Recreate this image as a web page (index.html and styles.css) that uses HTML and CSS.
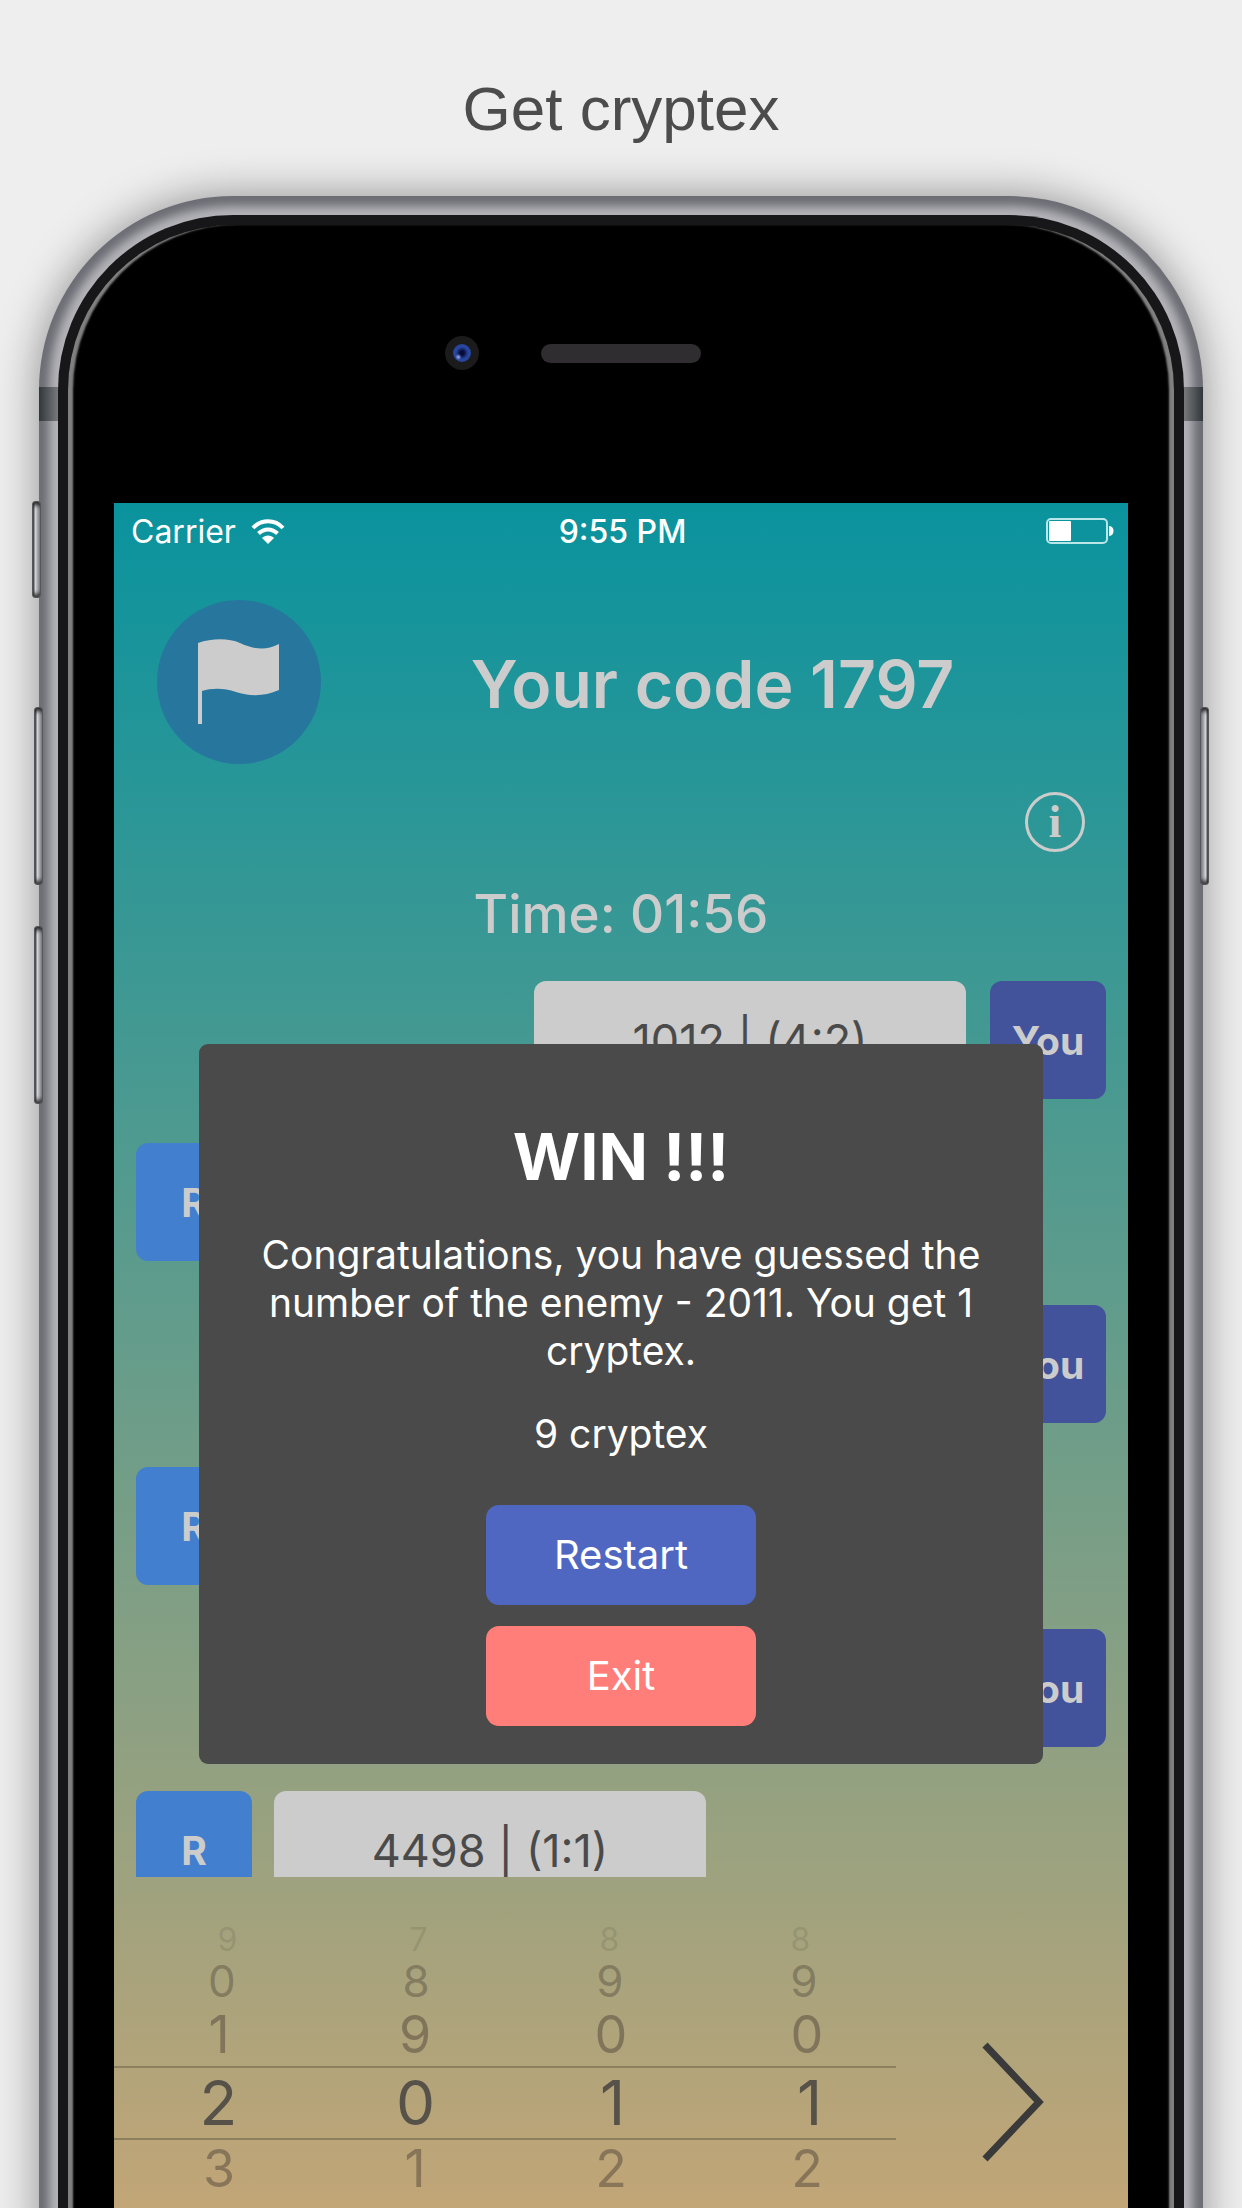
FILE: index.html
```html
<!DOCTYPE html>
<html lang="en">
<head>
  <meta charset="utf-8">
  <meta name="viewport" content="width=device-width, initial-scale=1">
  <title>Get cryptex</title>
  <link rel="stylesheet" href="styles.css">
</head>
<body>
  <main class="promo">
    <h1 class="promo-title">Get cryptex</h1>

    <div class="phone">
      <span class="side-key key-mute"></span>
      <span class="side-key key-up"></span>
      <span class="side-key key-down"></span>
      <span class="side-key key-power"></span>

      <div class="rim">
        <div class="face">
          <div class="sensors">
            <span class="camera"></span>
            <span class="speaker"></span>
          </div>

          <div class="screen">
            <div class="status">
              <div class="carrier">
                <span>Carrier</span>
                <svg width="34" height="25" viewBox="0 0 34 25" aria-hidden="true">
                  <g fill="none" stroke="#fff" stroke-width="4">
                    <path d="M2 9C10 0 24 0 32 9"/>
                    <path d="M7.500 14.500C13 9 21 9 26.500 14.500"/>
                  </g>
                  <path d="M11 19C14 15.500 20 15.500 23 19L17 25Z" fill="#fff"/>
                </svg>
              </div>
              <time class="clock">9:55 PM</time>
              <svg class="battery" width="68" height="26" viewBox="0 0 68 26" aria-hidden="true">
                <rect x="1" y="1" width="60" height="24" rx="4" fill="none" stroke="#b9e6e8" stroke-width="2"/>
                <rect x="3" y="3" width="22" height="20" rx="1" fill="#fff"/>
                <path d="M63 8C69 8 69 18 63 18Z" fill="#fff"/>
              </svg>
            </div>

            <header class="game-head">
              <button class="flag" type="button" aria-label="Give up">
                <svg width="82" height="86" viewBox="0 0 82 86" aria-hidden="true">
                  <path d="M0 4C14-1 31-1 42 4S66 13 81 5V51C66 58 50 57 38 53S14 49 4 52V85H0Z" fill="#ccc"/>
                </svg>
              </button>
              <h2 class="code">Your code 1797</h2>
            </header>

            <button class="info" type="button" aria-label="Information">i</button>
            <p class="timer">Time: 01:56</p>

            <ol class="moves">
              <li class="move mine"><span class="guess">1012 | (4:2)</span><span class="who">You</span></li>
              <li class="move rival"><span class="who">R</span></li>
              <li class="move mine"><span class="who">You</span></li>
              <li class="move rival"><span class="who">R</span></li>
              <li class="move mine"><span class="who">You</span></li>
              <li class="move rival"><span class="who">R</span><span class="guess">4498 | (1:1)</span></li>
            </ol>

            <div class="entry">
              <div class="picker">
                <div class="digits far"><span>9</span><span>7</span><span>8</span><span>8</span></div>
                <div class="digits mid"><span>0</span><span>8</span><span>9</span><span>9</span></div>
                <div class="digits near"><span>1</span><span>9</span><span>0</span><span>0</span></div>
                <div class="chosen">
                  <div class="digits"><span>2</span><span>0</span><span>1</span><span>1</span></div>
                </div>
                <div class="digits near below"><span>3</span><span>1</span><span>2</span><span>2</span></div>
              </div>
              <button class="send" type="button" aria-label="Send guess">
                <svg width="62" height="120" viewBox="0 0 62 120" aria-hidden="true">
                  <path d="M3 3L57 60L3 117" fill="none" stroke="#3a3a3a" stroke-width="7"/>
                </svg>
              </button>
            </div>

            <section class="dialog" role="dialog" aria-labelledby="result">
              <h3 class="result" id="result">WIN !!!</h3>
              <p class="message">Congratulations, you have guessed the number of the enemy - 2011. You get 1 cryptex.</p>
              <p class="balance">9 cryptex</p>
              <div class="actions">
                <button class="action restart" type="button">Restart</button>
                <button class="action exit" type="button">Exit</button>
              </div>
            </section>
          </div>
        </div>
      </div>
    </div>
  </main>
</body>
</html>
```
FILE: styles.css
```css
* {
  box-sizing: border-box;
}

body {
  margin: 0;
  background: #eee;
  font-family: Inter, "Liberation Sans", sans-serif;
}

h1, h2, h3, p, ol {
  margin: 0;
  padding: 0;
}

button {
  padding: 0;
  border: 0;
  background: none;
  color: inherit;
  font: inherit;
}

svg {
  display: block;
}

.promo {
  padding-top: 73px;
  overflow: hidden;
}

.promo-title {
  margin-bottom: 51px;
  color: #4c4c4c;
  font: 400 62px/72px "Liberation Sans", Arial, sans-serif;
  text-align: center;
}

/* Phone body: the lower end runs past the page edge */
.phone {
  position: relative;
  margin: 0 39px -40px;
  padding: 19px 19px 0;
  border-radius: 194px 194px 0 0;
  background: #b4b4b9;
  box-shadow: 0 0 44px rgba(0, 0, 0, 0.4), inset 0 0 10px 10px #6c6d74;
}

.phone::before,
.phone::after {
  content: "";
  position: absolute;
  top: 191px;
  width: 19px;
  height: 34px;
  background: linear-gradient(90deg, #30363a, #787a7c);
}

.phone::before {
  left: 0;
}

.phone::after {
  right: 0;
  transform: scaleX(-1);
}

.side-key {
  position: absolute;
  left: -5px;
  width: 9px;
  height: 178px;
  border: 1px solid #55565c;
  border-radius: 3px;
  background: linear-gradient(90deg, #55565c 1px, #dcdce0 2px, #9c9da3 5px, #85868c);
  box-shadow: inset 0 6px 4px -3px #222, inset 0 -6px 4px -3px #333;
}

.key-mute {
  top: 305px;
  left: -7px;
  height: 97px;
}

.key-up {
  top: 511px;
}

.key-down {
  top: 730px;
}

.key-power {
  top: 511px;
  right: -6px;
  left: auto;
  transform: scaleX(-1);
}

.rim {
  position: relative;
  padding: 10px 10px 0;
  border-radius: 175px 175px 0 0;
  background: #171719;
}

.face {
  padding: 0 46px;
  border-radius: 165px 165px 0 0;
  background: #000;
  box-shadow: inset 6px 0 2px -1px #808080, inset -6px 0 2px -1px #808080;
}

.sensors {
  display: grid;
  grid-template-columns: 1fr 160px 1fr;
  align-items: center;
  padding: 111px 0 133px;
}

.camera {
  justify-self: end;
  width: 34px;
  height: 34px;
  margin-right: 62px;
  border: 8px solid #1b1b1b;
  border-radius: 50%;
  background: radial-gradient(circle at 30% 72%, #9bb4e8 0, transparent 3px), radial-gradient(circle, #060c38 2px, #2845a0 6px, #2845a0);
}

.speaker {
  height: 19px;
  border-radius: 10px;
  background: #2f2d2f;
}

.screen {
  position: relative;
  padding-bottom: 51px;
  background: linear-gradient(#0a939e, #c6a676);
}

.status {
  display: grid;
  grid-template-columns: 1fr auto 1fr;
  align-items: center;
  height: 56px;
  padding: 0 14px 0 17px;
  color: #fff;
  font-size: 32px;
}

.carrier {
  display: flex;
  align-items: center;
  gap: 15px;
}

.clock {
  font-weight: 500;
}

.battery {
  justify-self: end;
}

.game-head {
  display: grid;
  grid-template-columns: 164px 1fr;
  align-items: center;
  padding: 41px 24px 0 43px;
}

.flag {
  display: grid;
  place-content: center;
  height: 164px;
  border-radius: 50%;
  background: #27769e;
}

.code {
  padding-top: 4px;
  color: #ccc;
  font-size: 66px;
  font-weight: 600;
  line-height: 80px;
  text-align: center;
}

.info {
  display: block;
  width: 60px;
  height: 60px;
  margin: 28px 43px 0 auto;
  border: 3px solid #ccc;
  border-radius: 50%;
  color: #ccc;
  font: 700 46px/52px "Liberation Serif", serif;
}

.timer {
  margin: 30px 0 35px;
  color: #ccc;
  font-size: 53px;
  font-weight: 500;
  line-height: 64px;
  text-align: center;
}

.moves {
  display: grid;
  grid-auto-rows: 118px;
  gap: 44px;
  height: 896px;
  padding: 0 22px;
  overflow: hidden;
  list-style: none;
}

.move {
  display: flex;
  gap: 22px;
}

.mine {
  justify-content: flex-end;
  gap: 24px;
}

.who,
.guess {
  border-radius: 12px;
  line-height: 120px;
  text-align: center;
}

.who {
  width: 116px;
  background: #42539b;
  color: #ccc;
  font-size: 39px;
  font-weight: 700;
}

.rival .who {
  background: #427fcf;
}

.guess {
  width: 432px;
  background: #ccc;
  color: #4a4a4a;
  font-size: 45px;
}

.entry {
  display: grid;
  grid-template-columns: 782fr 232fr;
  align-items: start;
}

.picker {
  padding-top: 45px;
}

.digits {
  display: grid;
  grid-template-columns: repeat(4, 1fr);
  margin-right: -12px;
  padding-left: 6px;
  color: #575249;
  font-size: 62px;
  line-height: 70px;
  text-align: center;
}

.far {
  padding: 0 12px 0 18px;
  color: rgba(70, 70, 60, 0.18);
  font-size: 32px;
  line-height: 36px;
}

.mid {
  padding: 0 7px 0 11px;
  color: rgba(70, 60, 50, 0.38);
  font-size: 44px;
  line-height: 46px;
}

.near {
  padding: 0 3px 0 7px;
  color: rgba(70, 60, 50, 0.45);
  font-size: 52px;
  line-height: 62px;
}

.below {
  line-height: 58px;
}

.chosen {
  border: solid #8d805f;
  border-width: 2px 0;
}

.send {
  margin: 165px 0 0 86px;
  justify-self: start;
}

.dialog {
  position: absolute;
  top: 541px;
  right: 85px;
  left: 85px;
  padding: 73px 50px 38px;
  border-radius: 9px;
  background: #4a4a4a;
  color: #fff;
  font-size: 39px;
  line-height: 48px;
  text-align: center;
}

.result {
  font-size: 65px;
  font-weight: 700;
  line-height: 80px;
}

.message {
  margin: 34px 0 35px;
}

.actions {
  display: grid;
  justify-content: center;
  grid-template-columns: 270px;
  gap: 21px;
  margin-top: 47px;
}

.action {
  height: 100px;
  border-radius: 13px;
  font-size: 40px;
}

.restart {
  background: #5067c2;
}

.exit {
  background: #ff7e79;
}
```
